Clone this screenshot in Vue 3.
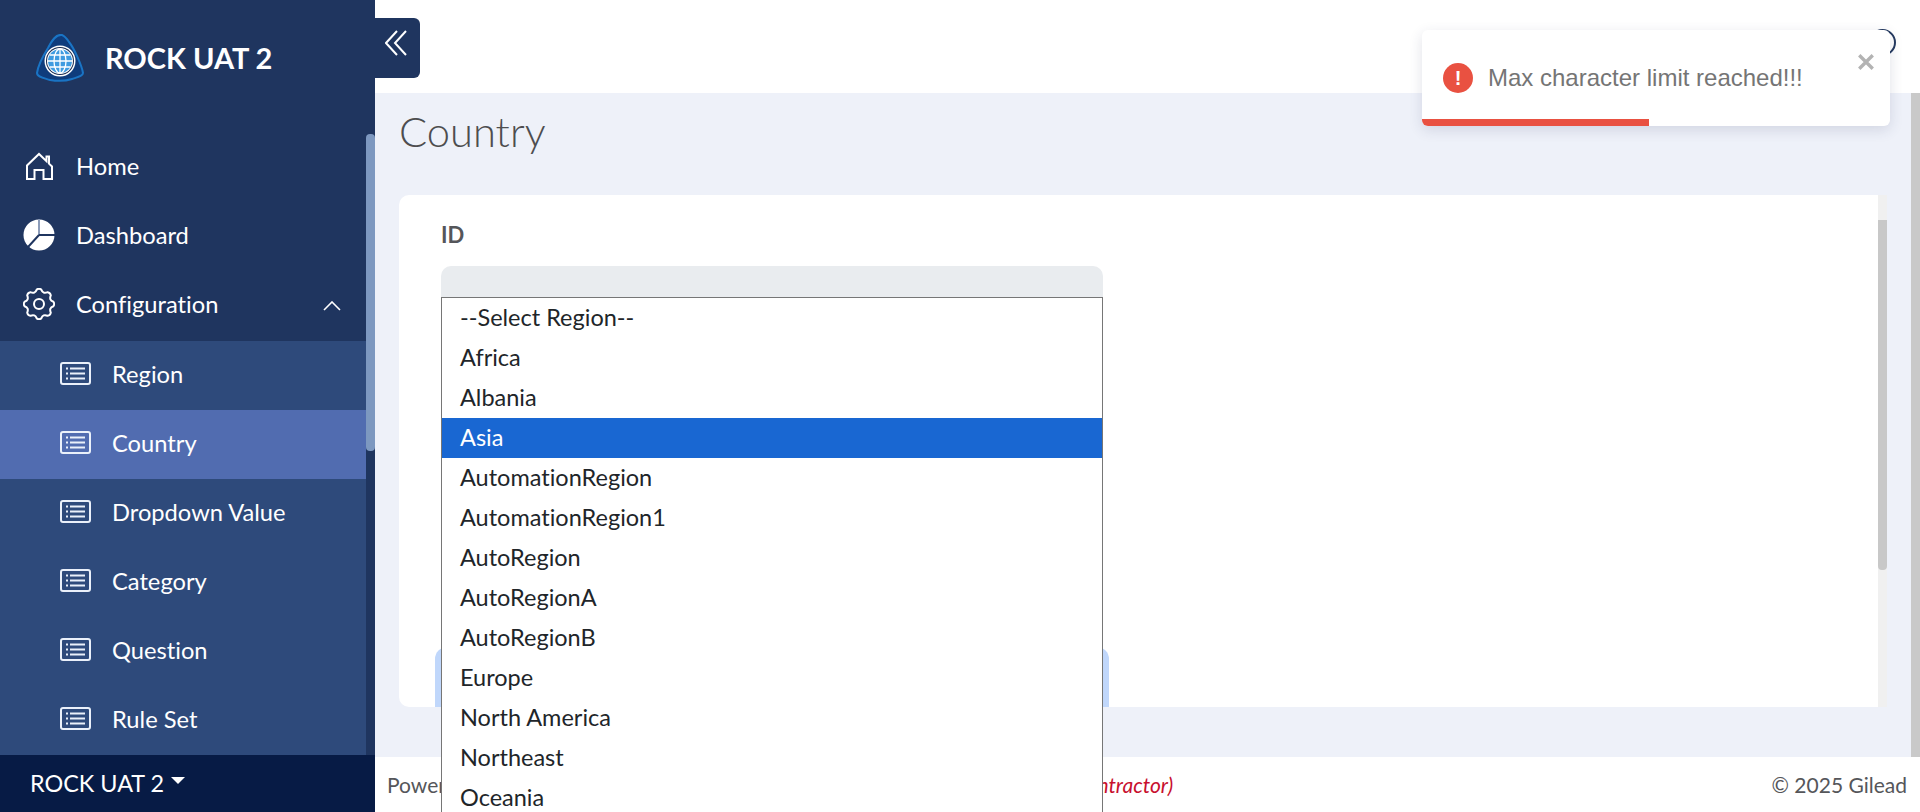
<template>
  <div class="app-shell">
    <aside class="sidebar">
      <div class="brand">
        <svg class="brand-logo" viewBox="0 0 48 48">
          <path d="M26 1C20 0 16 6 12 14 7 22 2 32 1 39c0 4 7 5 13 7 6 1 16 1 22-1 6-2 11-3 11-6C46 32 38 14 33 8 31 5 29 2 26 1z" fill="#0f3c7c" stroke="#1a74c4" stroke-width="2" />
          <circle cx="24" cy="27" r="15.5" fill="#fff" />
          <circle cx="24" cy="27" r="14" fill="#16294f" />
          <circle cx="24" cy="27" r="13" fill="#fff" />
          <circle cx="24" cy="27" r="12" fill="#3f9be0" />
          <g fill="none" stroke="#fff" stroke-width="1.3">
            <path d="M12 27h24M13.5 21h21M13.5 33h21M24 15v24" />
            <ellipse cx="24" cy="27" rx="6" ry="12" />
          </g>
        </svg>
        <span class="brand-name">ROCK UAT 2</span>
      </div>

      <div class="nav-wrap">
        <nav class="nav">
          <a class="nav-row">
            <svg class="nav-icon" viewBox="0 0 32 32" fill="none" stroke="#fff" stroke-width="2">
              <path d="M4 29V15.5L16 4l7.5 7.2V6.5h2.5v7.1l3 2.9V29h-8.5v-9h-9v9z" stroke-linejoin="miter" />
            </svg>
            <span>Home</span>
          </a>
          <a class="nav-row">
            <svg class="nav-icon" viewBox="0 0 32 32">
              <circle cx="16" cy="16" r="15.5" fill="#fff" />
              <path d="M16 16V0" stroke="#8c9cb9" stroke-width="2" />
              <path d="M16 16h16M16 16L5 28" stroke="#1f355f" stroke-width="2" />
            </svg>
            <span>Dashboard</span>
          </a>
          <a class="nav-row nav-row-open">
            <svg class="nav-icon" viewBox="0 0 32 32" fill="none" stroke="#fff" stroke-width="2">
              <path :d="gearPath" stroke-linejoin="round" />
              <circle cx="16" cy="16" r="5" />
            </svg>
            <span>Configuration</span>
            <svg class="nav-caret" viewBox="0 0 18 10" fill="none" stroke="#fff" stroke-width="1.6">
              <path d="M1 9l8-8 8 8" />
            </svg>
          </a>
          <a
            v-for="item in subItems"
            :key="item"
            class="sub-row"
            :class="{ active: item === 'Country' }"
          >
            <svg class="list-icon" viewBox="0 0 31 23" fill="none" stroke="#eaf0fa">
              <rect x="1" y="1" width="29" height="21" rx="2" stroke-width="2" />
              <path d="M10 6.5h15M10 11.5h15M10 16.5h15" stroke-width="2" />
              <path d="M6 6.5h2M6 11.5h2M6 16.5h2" stroke-width="2" />
            </svg>
            <span>{{ item }}</span>
          </a>
        </nav>
        <div class="nav-scroll"><div class="nav-thumb"></div></div>
      </div>

      <div class="env-bar">
        <span>ROCK UAT 2</span>
        <i class="env-caret"></i>
      </div>
    </aside>

    <main class="main">
      <header class="topbar"></header>

      <div class="page">
        <div class="page-body">
          <h1 class="page-title">Country</h1>
          <section class="card">
            <div class="card-body">
              <label class="field-label">ID</label>
              <div class="field">
                <div class="select-box"></div>
                <ul class="select-list">
                  <li
                    v-for="region in regions"
                    :key="region"
                    :class="{ selected: region === 'Asia' }"
                  >
                    {{ region }}
                  </li>
                </ul>
              </div>
              <div class="control-clip"><div class="focused-control"></div></div>
            </div>
            <div class="card-scroll"><div class="card-thumb"></div></div>
          </section>
        </div>
        <div class="page-scroll"></div>
      </div>

      <footer class="footer">
        <span class="powered">Powered by Rock Team <em>Contact: Support (Contractor)</em></span>
        <span class="copyright">© 2025 Gilead</span>
      </footer>
    </main>

    <button class="collapse-btn">
      <svg viewBox="0 0 22 26" fill="none" stroke="#fff" stroke-width="2">
        <path d="M12 1L1 13l11 12M21 1L10 13l11 12" />
      </svg>
    </button>

    <div class="avatar"></div>

    <div class="toast">
      <div class="toast-body">
        <span class="toast-icon">!</span>
        <span class="toast-text">Max character limit reached!!!</span>
      </div>
      <svg class="toast-close" viewBox="0 0 16 16" fill="none" stroke="#b3b3b3" stroke-width="3">
        <path d="M2 2l12 12M14 2L2 14" />
      </svg>
      <div class="toast-progress"></div>
    </div>
  </div>
</template>

<script setup>
const subItems = ['Region', 'Country', 'Dropdown Value', 'Category', 'Question', 'Rule Set']

const regions = [
  '--Select Region--',
  'Africa',
  'Albania',
  'Asia',
  'AutomationRegion',
  'AutomationRegion1',
  'AutoRegion',
  'AutoRegionA',
  'AutoRegionB',
  'Europe',
  'North America',
  'Northeast',
  'Oceania'
]

// eight rounded teeth round the centre of a 32 box
const gearPoint = (deg, r) => {
  const a = (deg * Math.PI) / 180
  return `${(16 + r * Math.cos(a)).toFixed(2)} ${(16 + r * Math.sin(a)).toFixed(2)}`
}

const gearPath = (() => {
  let d = ''
  for (let i = 0; i < 8; i++) {
    const mid = i * 45 - 90
    d += `${i === 0 ? 'M' : 'L'}${gearPoint(mid - 9, 14.6)} `
    d += `Q${gearPoint(mid, 16)} ${gearPoint(mid + 9, 14.6)} `
    d += `Q${gearPoint(mid + 22.5, 10.5)} ${gearPoint(mid + 36, 14.6)} `
  }
  return d + 'Z'
})()
</script>

<style>
html,
body {
  margin: 0;
  overflow: hidden;
}
</style>

<style scoped>
.app-shell {
  position: relative;
  display: flex;
  width: 1920px;
  height: 812px;
  overflow: hidden;
  font-family: Lato, "Liberation Sans", sans-serif;
  font-variant-ligatures: none;
  background: #fff;
}

.sidebar {
  display: flex;
  flex-direction: column;
  flex: 0 0 375px;
  height: 812px;
  background: #1f355f;
  color: #fff;
}

.brand {
  display: flex;
  align-items: center;
  gap: 21px;
  height: 133px;
  padding: 0 0 18px 36px;
  box-sizing: border-box;
}

.brand-logo {
  width: 48px;
  height: 48px;
}

.brand-name {
  font-size: 29px;
  font-weight: 700;
}

.nav-wrap {
  display: flex;
  height: 622px;
  overflow: hidden;
}

.nav {
  flex: 1;
}

.nav-row,
.sub-row {
  display: flex;
  align-items: center;
  height: 69px;
  padding-bottom: 4px;
  box-sizing: border-box;
  font-size: 23.7px;
  color: #fff;
}

.nav-row {
  padding-left: 23px;
}

.nav-row-open {
  height: 70px;
}

.nav-icon {
  flex: none;
  width: 32px;
  height: 32px;
  margin-right: 21px;
}

.nav-caret {
  width: 18px;
  height: 10px;
  margin-top: 4px;
  margin-left: auto;
  margin-right: 25px;
}

.sub-row {
  padding-left: 60px;
  background: #2e4a7b;
}

.sub-row.active {
  background: #516cb0;
}

.list-icon {
  flex: none;
  width: 31px;
  height: 23px;
  margin-right: 21px;
}

.nav-scroll {
  flex: 0 0 9px;
}

.nav-thumb {
  height: 317px;
  margin-top: 1px;
  background: #7d98c0;
  border-radius: 4px;
}

.env-bar {
  display: flex;
  align-items: center;
  gap: 7px;
  flex: 1;
  padding: 0 0 2px 30px;
  background: #071b45;
  font-size: 23.4px;
}

.env-caret {
  width: 0;
  height: 0;
  margin-top: -4px;
  border-left: 7px solid transparent;
  border-right: 7px solid transparent;
  border-top: 7px solid #fff;
}

.main {
  display: flex;
  flex-direction: column;
  flex: 1;
  min-width: 0;
}

.topbar {
  flex: 0 0 93px;
  background: #fff;
}

.page {
  display: flex;
  flex: 1;
  min-height: 0;
  background: #eef1f9;
}

.page-body {
  flex: 1;
  min-width: 0;
  padding-left: 24px;
}

.page-title {
  margin: 0;
  height: 102px;
  padding-top: 13px;
  box-sizing: border-box;
  font-size: 41.7px;
  line-height: 50px;
  font-weight: 300;
  color: #4d4d4f;
}

.page-scroll {
  flex: 0 0 9px;
  background: #c9c9c9;
}

.card {
  display: flex;
  width: 1488px;
  height: 512px;
  background: #fff;
  border-radius: 10px 0 0 10px;
}

.card-body {
  flex: 1;
  min-width: 0;
  padding: 26px 0 0 42px;
}

.field-label {
  display: block;
  height: 45px;
  font-size: 22px;
  line-height: 28px;
  font-weight: 700;
  color: #55565a;
}

.field {
  position: relative;
  width: 662px;
}

.select-box {
  height: 50px;
  background: #e9ecef;
  border-radius: 10px 10px 0 0;
}

.select-list {
  position: absolute;
  z-index: 5;
  top: 31px;
  left: 0;
  width: 662px;
  margin: 0;
  padding: 0;
  box-sizing: border-box;
  list-style: none;
  background: #fff;
  border: 1px solid #767676;
  border-bottom: 0;
  font-size: 23.5px;
  color: #212529;
}

.select-list li {
  height: 40px;
  padding-left: 18px;
  line-height: 38px;
}

.select-list li.selected {
  background: #1967d2;
  color: #fff;
}

.control-clip {
  width: 674px;
  height: 60px;
  margin: 331px 0 0 -6px;
  overflow: hidden;
}

.focused-control {
  width: 662px;
  height: 80px;
  margin: 6px 0 0 6px;
  border-radius: 6px;
  box-shadow: 0 0 0 6px #c0d7fb;
}

.card-scroll {
  flex: 0 0 9px;
  background: #f0f0f0;
}

.card-thumb {
  height: 350px;
  margin-top: 25px;
  background: #c8c8c8;
  border-radius: 0 0 4px 4px;
}

.footer {
  display: flex;
  align-items: center;
  justify-content: space-between;
  flex: 0 0 55px;
  padding: 0 13px 0 12px;
  font-size: 21px;
  color: #55565a;
}

.powered em {
  color: #c8102e;
  margin-left: 310px;
}

.collapse-btn {
  position: absolute;
  top: 18px;
  left: 375px;
  display: flex;
  align-items: center;
  justify-content: center;
  width: 45px;
  height: 60px;
  padding: 0;
  border: 0;
  border-radius: 0 6px 6px 0;
  background: #1f355f;
}

.collapse-btn svg {
  width: 22px;
  height: 26px;
  margin: -10px 0 0 -4px;
}

.avatar {
  position: absolute;
  top: 29px;
  left: 1869px;
  width: 27px;
  height: 27px;
  box-sizing: border-box;
  border: 2px solid #24395f;
  border-radius: 50%;
}

.toast {
  position: absolute;
  z-index: 10;
  top: 30px;
  left: 1422px;
  width: 468px;
  height: 96px;
  overflow: hidden;
  background: #fff;
  border-radius: 6px;
  box-shadow: 0 4px 14px rgba(40, 50, 90, 0.14);
}

.toast-body {
  display: flex;
  align-items: center;
  gap: 15px;
  padding: 33px 0 0 21px;
}

.toast-icon {
  display: flex;
  align-items: center;
  justify-content: center;
  width: 30px;
  height: 30px;
  border-radius: 50%;
  background: #e95141;
  color: #fff;
  font-family: "Liberation Sans", sans-serif;
  font-size: 20px;
  font-weight: 700;
}

.toast-text {
  font-family: "Liberation Sans", Arial, sans-serif;
  font-size: 24px;
  color: #757575;
}

.toast-close {
  position: absolute;
  top: 23px;
  left: 435px;
  width: 18px;
  height: 18px;
}

.toast-progress {
  position: absolute;
  left: 0;
  bottom: 0;
  width: 227px;
  height: 7px;
  background: #e95141;
}
</style>
